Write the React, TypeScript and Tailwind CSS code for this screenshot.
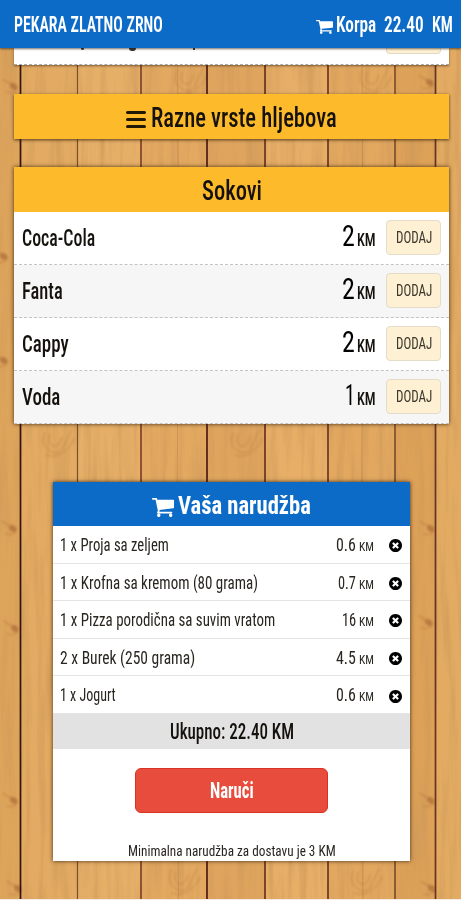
import { useLayoutEffect, useRef, useState, type ReactNode } from "react";

/** Condensed lettering: squeezes its text horizontally into the width of its box. */
function Fit({ className, children }: { className: string; children: ReactNode }) {
  const box = useRef<HTMLSpanElement>(null);
  const text = useRef<HTMLSpanElement>(null);
  const [scale, setScale] = useState(1);
  useLayoutEffect(() => {
    if (box.current && text.current) {
      setScale(box.current.offsetWidth / text.current.offsetWidth);
    }
  }, []);
  return (
    <span ref={box} className={`inline-block shrink-0 whitespace-pre text-left ${className}`}>
      <span ref={text} className="inline-block origin-left" style={{ transform: `scaleX(${scale})` }}>
        {children}
      </span>
    </span>
  );
}

function Cart({ className }: { className: string }) {
  return (
    <svg viewBox="64 256 1664 1408" preserveAspectRatio="none" fill="currentColor" className={className}>
      <path d="M704 1536q0 52-38 90t-90 38-90-38-38-90 38-90 90-38 90 38 38 90zm896 0q0 52-38 90t-90 38-90-38-38-90 38-90 90-38 90 38 38 90zm128-1088v512q0 24-16.500 42.500t-40.500 21.500l-1044 122q13 60 13 70 0 16-24 64h920q26 0 45 19t19 45-19 45-45 19h-1024q-26 0-45-19t-19-45q0-11 8-31.500t16-36 21.500-40 15.500-29.500l-177-823h-204q-26 0-45-19t-19-45 19-45 45-19h256q16 0 28.500 6.500t19.500 15.500 13 24.500 8 26 5.500 29.500 4.500 26h1201q26 0 45 19t19 45z" />
    </svg>
  );
}

function Remove() {
  return (
    <svg viewBox="128 128 1536 1536" fill="currentColor" className="ml-[15px] mt-[3px] size-[13px] shrink-0 text-black">
      <path d="M1277 1122q0-26-19-45l-181-181 181-181q19-19 19-45 0-27-19-46l-90-90q-19-19-46-19-26 0-45 19l-181 181-181-181q-19-19-45-19-27 0-46 19l-90 90q-19 19-19 46 0 26 19 45l181 181-181 181q-19 19-19 45 0 27 19 46l90 90q19 19 46 19 26 0 45-19l181-181 181 181q19 19 45 19 27 0 46-19l90-90q19-19 19-46zm387-226q0 209-103 385.500t-279.500 279.500-385.500 103-385.500-103-279.500-279.500-103-385.500 103-385.500 279.500-279.500 385.500-103 385.500 103 279.500 279.500 103 385.500z" />
    </svg>
  );
}

const seams = [
  { x: 20.5, w: 1.7, c: "#35130d" },
  { x: 77.5, w: 1.2, c: "#79502d" },
  { x: 141, w: 1.8, c: "#86472d" },
  { x: 207, w: 1.7, c: "#4f1c14" },
  { x: 265, w: 1.6, c: "#632d1d" },
  { x: 328, w: 1.6, c: "#642e20" },
  { x: 395, w: 1.7, c: "#80502d" },
  { x: 435.5, w: 1.7, c: "#6a3320" },
];
const planks = [
  { x: 0, w: 20, c: "#dda45b" },
  { x: 21, w: 57, c: "#e2aa62" },
  { x: 78, w: 63, c: "#e6af68" },
  { x: 142, w: 65, c: "#e3a961" },
  { x: 208, w: 57, c: "#dfa55e" },
  { x: 266, w: 62, c: "#e6ae67" },
  { x: 329, w: 66, c: "#e2a860" },
  { x: 396, w: 39, c: "#dda158" },
  { x: 436, w: 25, c: "#e3ab62" },
];
const knots = [
  { x: 13, y: 86 }, { x: 3, y: 256 }, { x: 3, y: 360 }, { x: 12, y: 528 },
  { x: 14, y: 628 }, { x: 13, y: 800 }, { x: 17, y: 888 }, { x: 429, y: 82 },
  { x: 430, y: 528 }, { x: 428, y: 622 }, { x: 430, y: 800 }, { x: 431, y: 888 },
];
const swirls = [
  { x: 190, y: 84 }, { x: 375, y: 84 }, { x: 58, y: 446 }, { x: 246, y: 446 },
  { x: 184, y: 884 }, { x: 366, y: 884 },
];

function Wood() {
  return (
    <svg className="absolute inset-0 -z-10 h-[900px] w-[461px]" viewBox="0 0 461 900">
      <defs>
        <filter id="grain" x="0" y="0" width="100%" height="100%">
          <feTurbulence type="fractalNoise" baseFrequency="0.13 0.009" numOctaves="4" seed="8" />
          <feColorMatrix values="0 0 0 0 0.62  0 0 0 0 0.32  0 0 0 0 0.1  1.7 0 0 0 -0.7" />
        </filter>
        <filter id="soft" x="-50%" y="-50%" width="200%" height="200%">
          <feGaussianBlur stdDeviation="0.8" />
        </filter>
      </defs>
      {planks.map((p) => (
        <rect key={p.x} x={p.x} width={p.w + 1} height="900" fill={p.c} />
      ))}
      <rect width="461" height="900" filter="url(#grain)" />
      {knots.map(({ x, y }) => (
        <g key={`${x}-${y}`} fill="none" stroke="#9a5528" opacity="0.5" filter="url(#soft)">
          <path d={`M${x - 10} ${y - 7}q5 5 10 5`} />
          <ellipse cx={x + 1} cy={y} rx="3.5" ry="2.5" fill="#9a5528" transform={`rotate(35 ${x} ${y})`} />
          <path d={`M${x - 7} ${y + 6}q7 2 12-3`} opacity="0.7" />
        </g>
      ))}
      {swirls.map(({ x, y }) => (
        <g key={`${x}-${y}`} fill="none" stroke="#ae6c34" opacity="0.5" filter="url(#soft)">
          <path d={`M${x - 13} ${y - 14}q-5 13 5 19t15-7 7-14`} />
          <path d={`M${x - 8} ${y - 12}q-3 10 3 12t9-9`} />
          <path d={`M${x - 12} ${y + 9}q11 4 20-5t8-12`} />
        </g>
      ))}
      {[177.5, 362].map((x) => (
        <path key={x} d={`M${x} 48q2 200 0 400t1 452`} stroke="#b97a3e" strokeWidth="1" opacity="0.45" fill="none" />
      ))}
      {seams.map((s) => (
        <rect key={s.x} x={s.x - s.w / 2} width={s.w} height="900" fill={s.c} />
      ))}
    </svg>
  );
}

const drinks = [
  { name: "Coca-Cola", price: "2", w: "w-[73px]", pw: "w-[13px]", bg: "bg-white" },
  { name: "Fanta", price: "2", w: "w-[41px]", pw: "w-[13px]", bg: "bg-[#f6f6f6]" },
  { name: "Cappy", price: "2", w: "w-[47px]", pw: "w-[13px]", bg: "bg-white" },
  { name: "Voda", price: "1", w: "w-[38px]", pw: "w-[10px]", bg: "bg-[#f6f6f6]" },
];

const order = [
  { name: "1 x Proja sa zeljem", price: "0.6", w: "w-[109px]", pw: "w-[20px]" },
  { name: "1 x Krofna sa kremom (80 grama)", price: "0.7", w: "w-[198px]", pw: "w-[18px]" },
  { name: "1 x Pizza porodična sa suvim vratom", price: "16", w: "w-[215px]", pw: "w-[14px]" },
  { name: "2 x Burek (250 grama)", price: "4.5", w: "w-[135px]", pw: "w-[20px]" },
  { name: "1 x Jogurt", price: "0.6", w: "w-[56px]", pw: "w-[20px]" },
];

export default function App() {
  return (
    <div className="relative isolate flex h-[900px] w-[461px] flex-col overflow-hidden border-b border-[#f4ece2] text-[#15110c] [font-family:Roboto,'Liberation_Sans',sans-serif] [font-stretch:75%]">
      <Wood />
      <header className="z-10 flex h-12 shrink-0 items-center bg-[#0d6bc8] pl-[14px] pr-[8px] pt-px text-[22px] font-semibold leading-none text-white shadow-[0_1px_2px_rgba(40,30,20,0.65)]">
        <Fit className="w-[149px]">PEKARA ZLATNO ZRNO</Fit>
        <Cart className="ml-auto mr-[3px] mt-1 h-[14px] w-[17px]" />
        <Fit className="mr-2 w-[40px]">Korpa</Fit>
        <Fit className="mr-[8px] w-[40px]">22.40</Fit>
        <Fit className="w-[21px]">KM</Fit>
      </header>

      <div className="ml-[14px] mr-3 flex h-[17px] shrink-0 items-start border-b border-dashed border-[#aaa] bg-white shadow-[0_1px_2px_rgba(60,40,20,0.6)]">
        <i className="ml-[67px] h-[2px] w-[3px] rounded-b bg-[#343434]" />
        <i className="ml-[45px] h-[3px] w-[7px] rounded-b bg-[#343434]" />
        <i className="ml-[57px] h-[2px] w-[2px] bg-[#343434]" />
        <i className="ml-auto mr-2 h-[6px] w-[55px] rounded-b border border-t-0 border-[#e2d9c2] bg-[#fdf0d3]" />
      </div>

      <section className="ml-[14px] mr-3 mt-[29px] flex h-[45px] shrink-0 items-center bg-[#fdbb2c] pl-[112px] pt-[3px] text-[27px] font-medium leading-none shadow-[0_1px_3px_rgba(50,30,10,0.8)]">
        <span className="mr-[5px] mt-[2px] flex h-[17px] w-[20px] flex-col justify-between">
          <i className="h-[3px] rounded-sm bg-[#211805]" />
          <i className="h-[3px] rounded-sm bg-[#211805]" />
          <i className="h-[3px] rounded-sm bg-[#211805]" />
        </span>
        <Fit className="w-[186px]">Razne vrste hljebova</Fit>
      </section>

      <section className="ml-[14px] mr-3 mt-[28px] shrink-0 shadow-[0_0_4px_rgba(50,30,10,0.9)]">
        <h2 className="flex h-[45px] items-center justify-center bg-[#fdbb2c] pt-[3px] text-[27px] font-medium leading-none">
          <Fit className="w-[60px]">Sokovi</Fit>
        </h2>
        {drinks.map((d) => (
          <div key={d.name} className={`flex h-[53px] items-center border-b-[1.5px] border-dashed border-[#c3c3c3] px-2 leading-none ${d.bg}`}>
            <Fit className={`pt-px text-[23px] font-medium ${d.w}`}>{d.name}</Fit>
            <span className="-mt-[4px] ml-auto mr-[10px] flex items-baseline gap-[2px]">
              <Fit className={`text-[30px] font-normal text-black ${d.pw}`}>{d.price}</Fit>
              <Fit className="w-[19px] text-[18px] font-medium">KM</Fit>
            </span>
            <button className="-mt-px flex h-[35px] w-[55px] items-center justify-center rounded border border-[#e4dcc9] bg-[#fdf0d3] text-[17px] text-[#3d382d]">
              <Fit className="w-[36px]">DODAJ</Fit>
            </button>
          </div>
        ))}
      </section>

      <section className="ml-[53px] mt-[58px] flex h-[379px] w-[357px] shrink-0 flex-col bg-white shadow-[0_0_4px_rgba(50,30,10,0.9)]">
        <h2 className="flex h-11 shrink-0 items-center bg-[#0d6bc8] pl-[99px] pt-[3px] text-[26.5px] font-bold leading-none text-white">
          <Cart className="mr-[4px] mt-[3px] h-[19px] w-[22px]" />
          <Fit className="w-[133px]">Vaša narudžba</Fit>
        </h2>
        <div className="flex h-[188px] shrink-0 flex-col text-[17.5px] leading-none text-[#29251f]">
          {order.map((o) => (
            <div key={o.name} className="flex flex-1 items-center border-b border-[#e4e4e4] pl-[7px] pr-[8px]">
              <Fit className={`pt-[3px] ${o.w}`}>{o.name}</Fit>
              <span className="ml-auto flex items-baseline gap-[3px] pt-[3px]">
                <Fit className={o.pw}>{o.price}</Fit>
                <Fit className="w-[15px] text-[13px]">KM</Fit>
              </span>
              <Remove />
            </div>
          ))}
        </div>
        <div className="flex h-[35px] shrink-0 items-center justify-center bg-[#e2e2e2] text-[21.5px] font-medium leading-none">
          <Fit className="w-[124px]">Ukupno: 22.40 KM</Fit>
        </div>
        <button className="mt-[19px] flex h-[45px] w-[193px] shrink-0 items-center justify-center self-center rounded-md border border-[#d93222] bg-[#e84c3d] text-[22px] font-bold leading-none text-white">
          <Fit className="w-[44px]">Naruči</Fit>
        </button>
        <p className="mt-[31px] flex justify-center text-[14.5px] leading-4 text-[#29251f]">
          <Fit className="w-[208px]">Minimalna narudžba za dostavu je 3 KM</Fit>
        </p>
      </section>
    </div>
  );
}
